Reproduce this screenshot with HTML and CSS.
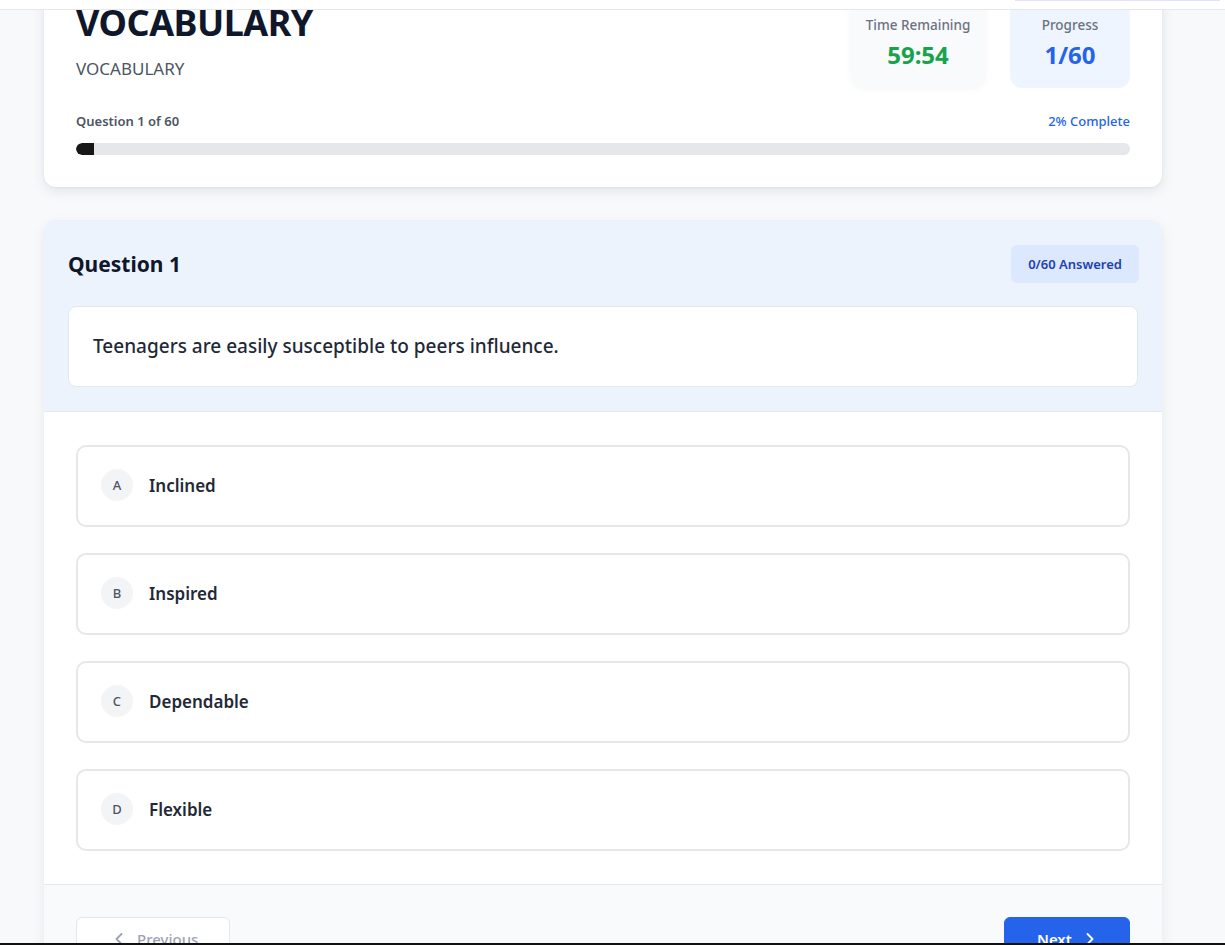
FILE: index.html
```html
<!DOCTYPE html>
<html lang="en">
<head>
<meta charset="utf-8">
<title>Vocabulary Quiz</title>
<link rel="stylesheet" href="styles.css">
</head>
<body>
<div class="topbar"><div class="topbar-accent"></div></div>
<main class="page">
  <section class="header-card">
    <div class="header-row">
      <div class="titles">
        <h1 class="title">VOCABULARY</h1>
        <p class="subtitle">VOCABULARY</p>
      </div>
      <div class="stats">
        <div class="stat stat-time">
          <div class="stat-label">Time Remaining</div>
          <div class="stat-value green">59:54</div>
        </div>
        <div class="stat stat-progress">
          <div class="stat-label">Progress</div>
          <div class="stat-value blue">1/60</div>
        </div>
      </div>
    </div>
    <div class="progress-meta">
      <span class="pm-left">Question 1 of 60</span>
      <span class="pm-right">2% Complete</span>
    </div>
    <div class="bar"><div class="bar-fill" style="width:1.7%"></div></div>
  </section>

  <section class="question-card">
    <div class="q-head">
      <div class="q-head-row">
        <h2 class="q-title">Question 1</h2>
        <span class="badge">0/60 Answered</span>
      </div>
      <div class="q-text">Teenagers are easily susceptible to peers influence.</div>
    </div>
    <div class="options">
      <div class="option"><span class="letter">A</span><span class="opt-text">Inclined</span></div>
      <div class="option"><span class="letter">B</span><span class="opt-text">Inspired</span></div>
      <div class="option"><span class="letter">C</span><span class="opt-text">Dependable</span></div>
      <div class="option"><span class="letter">D</span><span class="opt-text">Flexible</span></div>
    </div>
    <div class="q-foot">
      <button class="btn btn-prev" disabled>
        <svg class="chev" viewBox="0 0 20 20" width="20" height="20"><path d="M12.5 15 7.5 10l5-5" fill="none" stroke="currentColor" stroke-width="1.8" stroke-linecap="round" stroke-linejoin="round"/></svg>
        <span>Previous</span>
      </button>
      <button class="btn btn-next">
        <span>Next</span>
        <svg class="chev" viewBox="0 0 20 20" width="20" height="20"><path d="M7.5 5l5 5-5 5" fill="none" stroke="currentColor" stroke-width="1.8" stroke-linecap="round" stroke-linejoin="round"/></svg>
      </button>
    </div>
  </section>
</main>
<div class="bottom-edge"></div>
</body>
</html>
```
FILE: styles.css
```css
* { box-sizing: border-box; }
html, body { margin: 0; padding: 0; }
body {
  background: #f8f9fb;
  font-family: "Noto Sans", "Open Sans", sans-serif;
  color: #111827;
  overflow: hidden;
  height: 945px;
}
.topbar {
  position: fixed;
  top: 0; left: 0; right: 0;
  height: 10px;
  background: #ffffff;
  border-bottom: 1px solid #e5e7eb;
  z-index: 10;
}
.topbar-accent {
  position: absolute;
  top: 0; left: 1015px;
  width: 205px; height: 1px;
  background: #e2e0fa;
}
.bottom-edge {
  position: fixed;
  left: 0; right: 0; bottom: 0;
  height: 2px;
  background: #111;
  z-index: 10;
}
.page {
  width: 1120px;
  margin-left: 43px;
}
.header-card {
  margin: -29px 1px 0 1px;
  background: #fff;
  border-radius: 12px;
  box-shadow: 0 4px 14px rgba(15, 23, 42, 0.09), 0 1px 3px rgba(15, 23, 42, 0.05);
  padding: 32px;
}
.header-row {
  display: flex;
  justify-content: space-between;
  align-items: flex-start;
}
.title {
  margin: 0;
  font-size: 36px;
  line-height: 40px;
  font-weight: 700;
  color: #0f172a;
  letter-spacing: -0.5px;
}
.subtitle {
  margin: 14px 0 0 0;
  font-size: 17px;
  line-height: 24px;
  font-weight: 400;
  color: #4b5563;
}
.stats {
  display: flex;
  gap: 25px;
  margin-top: -3px;
}
.stat {
  border-radius: 12px;
  padding: 15px 0 16px;
  text-align: center;
  height: 88px;
  white-space: nowrap;
}
.stat-time {
  width: 134px;
  background: #f8fafc;
  box-shadow: 0 0 6px rgba(148, 163, 184, 0.12);
}
.stat-progress {
  width: 120px;
  background: #eef5fe;
}
.stat-label {
  font-size: 13.5px;
  line-height: 20px;
  color: #6b7280;
  font-weight: 500;
}
.stat-value {
  margin-top: 4px;
  font-size: 24px;
  line-height: 32px;
  font-weight: 700;
}
.green { color: #16a34a; }
.blue { color: #2563eb; }
.progress-meta {
  display: flex;
  justify-content: space-between;
  margin-top: 23px;
  font-size: 13px;
  line-height: 20px;
}
.pm-left { color: #4b5563; font-weight: 600; }
.pm-right { color: #2563eb; font-weight: 500; }
.bar {
  margin-top: 12px;
  height: 12px;
  background: #e5e7eb;
  border-radius: 999px;
  overflow: hidden;
}
.bar-fill {
  height: 100%;
  background: #171717;
  border-radius: 999px 3px 3px 999px;
}
.question-card {
  margin-top: 33px;
  background: #fff;
  border: 1px solid #eef0f4;
  border-radius: 12px 12px 0 0;
  box-shadow: 0 4px 14px rgba(15, 23, 42, 0.06);
  overflow: hidden;
}
.q-head {
  background: #edf3fd;
  padding: 24px;
  border-bottom: 1px solid #e5e7eb;
}
.q-head-row {
  display: flex;
  justify-content: space-between;
  align-items: center;
  height: 38px;
}
.q-title {
  margin: 0;
  font-size: 21px;
  line-height: 28px;
  font-weight: 700;
  color: #0f172a;
}
.badge {
  background: #dbe8fd;
  color: #1e40af;
  font-size: 13px;
  line-height: 20px;
  font-weight: 600;
  padding: 9px 17px;
  border-radius: 6px;
  margin-right: -1px;
}
.q-text {
  margin-top: 23px;
  background: #fff;
  border: 1px solid #e3e7ee;
  border-radius: 8px;
  padding: 24px;
  font-size: 19px;
  line-height: 31px;
  font-weight: 500;
  color: #1f2937;
}
.options {
  padding: 33px 32px;
  display: flex;
  flex-direction: column;
  gap: 26px;
  background: #fff;
}
.option {
  height: 82px;
  border: 2px solid #e5e7eb;
  border-radius: 10px;
  display: flex;
  align-items: center;
  padding: 0 23px 2px;
  gap: 16px;
  background: #fff;
}
.letter {
  width: 32px;
  height: 32px;
  border-radius: 50%;
  background: #f3f4f6;
  color: #4b5563;
  font-size: 13px;
  font-weight: 500;
  display: flex;
  align-items: center;
  justify-content: center;
}
.opt-text {
  font-size: 17px;
  font-weight: 600;
  color: #1f2937;
}
.q-foot {
  background: #f9fafb;
  border-top: 1px solid #e5e7eb;
  padding: 32px 32px 40px;
  display: flex;
  justify-content: space-between;
}
.btn {
  display: flex;
  align-items: center;
  gap: 8px;
  font-family: inherit;
  font-size: 15px;
  line-height: 24px;
  font-weight: 500;
  border-radius: 6px;
  padding: 9px 32px;
  height: 44px;
}
.btn-prev {
  width: 154px;
  background: #fff;
  border: 1px solid #e5e7eb;
  color: #9ca3af;
}
.btn-next {
  width: 126px;
  background: #2563eb;
  border: 1px solid #2563eb;
  color: #fff;
  font-weight: 600;
}
.chev { display: block; flex: none; }
```
